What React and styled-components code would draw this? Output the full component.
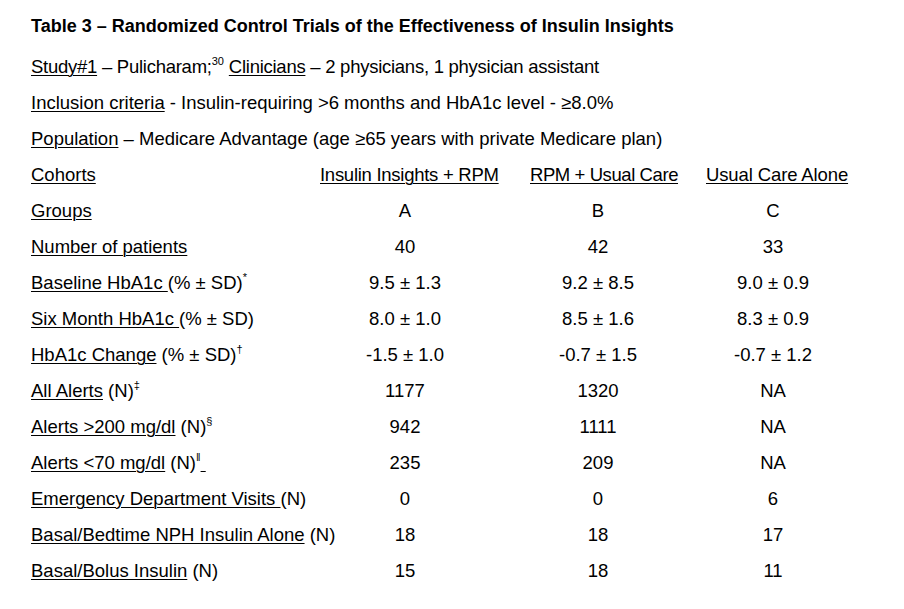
import React from "react";
import styled, { createGlobalStyle } from "styled-components";

const GlobalStyle = createGlobalStyle`
  html, body {
    margin: 0;
    padding: 0;
    background: #ffffff;
  }
  body {
    font-family: "Liberation Sans", Arial, sans-serif;
    color: #000000;
  }
`;

const Page = styled.div`
  width: 904px;
  height: 609px;
  box-sizing: border-box;
  padding: 8px 0 0 31px;
  background: #ffffff;
  overflow: hidden;
`;

const Title = styled.div`
  font-weight: 700;
  font-size: 18px;
  line-height: 36px;
  margin-bottom: 5px;
  white-space: nowrap;
`;

const Line = styled.div`
  font-size: 18.5px;
  line-height: 36px;
  white-space: nowrap;
  letter-spacing: ${(p) => p.$spacing || 0}px;
`;

const U = styled.span`
  text-decoration: underline;
  text-underline-offset: 2px;
  text-decoration-thickness: 1px;
`;

const Sup = styled.sup`
  font-size: 11px;
  line-height: 0;
  vertical-align: 8px;
  letter-spacing: 0;
`;

const Grid = styled.div`
  display: grid;
  grid-template-columns: 249px 170px 136px 134px;
  column-gap: 40px;
  grid-auto-rows: 36px;
  font-size: 18.5px;
  line-height: 36px;
`;

const Label = styled.div`
  white-space: nowrap;
`;

const Head = styled.div`
  white-space: nowrap;
  text-align: left;
  letter-spacing: ${(p) => p.$spacing || 0}px;
`;

const Value = styled.div`
  white-space: nowrap;
  text-align: center;
`;

const heads = [
  { text: "Insulin Insights + RPM", spacing: -0.27 },
  { text: "RPM + Usual Care", spacing: -0.42 },
  { text: "Usual Care Alone", spacing: -0.12 },
];

const rows = [
  { label: "Groups", values: ["A", "B", "C"] },
  { label: "Number of patients", values: ["40", "42", "33"] },
  {
    label: "Baseline HbA1c ",
    rest: "(% ± SD)",
    sup: "*",
    values: ["9.5 ± 1.3", "9.2 ± 8.5", "9.0 ± 0.9"],
  },
  {
    label: "Six Month HbA1c ",
    rest: "(% ± SD)",
    values: ["8.0 ± 1.0", "8.5 ± 1.6", "8.3 ± 0.9"],
  },
  {
    label: "HbA1c Change",
    rest: " (% ± SD)",
    sup: "†",
    values: ["-1.5 ± 1.0", "-0.7 ± 1.5", "-0.7 ± 1.2"],
  },
  { label: "All Alerts", rest: " (N)", sup: "‡", values: ["1177", "1320", "NA"] },
  { label: "Alerts >200 mg/dl", rest: " (N)", sup: "§", values: ["942", "1111", "NA"] },
  {
    label: "Alerts <70 mg/dl",
    rest: " (N)",
    sup: "‖",
    trail: true,
    values: ["235", "209", "NA"],
  },
  { label: "Emergency Department Visits ", rest: "(N)", values: ["0", "0", "6"] },
  { label: "Basal/Bedtime NPH Insulin Alone", rest: " (N)", values: ["18", "18", "17"] },
  { label: "Basal/Bolus Insulin", rest: " (N)", values: ["15", "18", "11"] },
];

const App = () => {
  return (
    <>
      <GlobalStyle />
      <Page>
        <Title>Table 3 – Randomized Control Trials of the Effectiveness of Insulin Insights</Title>
        <Line $spacing={-0.26}>
          <U>Study#1</U> – Pulicharam;<Sup>30</Sup> <U>Clinicians</U> – 2 physicians, 1 physician
          assistant
        </Line>
        <Line>
          <U>Inclusion criteria</U> - Insulin-requiring &gt;6 months and HbA1c level - ≥8.0%
        </Line>
        <Line>
          <U>Population</U> – Medicare Advantage (age ≥65 years with private Medicare plan)
        </Line>
        <Grid>
          <Label>
            <U>Cohorts</U>
          </Label>
          {heads.map((h) => (
            <Head key={h.text} $spacing={h.spacing}>
              <U>{h.text}</U>
            </Head>
          ))}
          {rows.map((row) => (
            <React.Fragment key={row.label}>
              <Label>
                <U>{row.label}</U>
                {row.rest}
                {row.sup && <Sup>{row.sup}</Sup>}
                {row.trail && <U>&nbsp;</U>}
              </Label>
              {row.values.map((v, i) => (
                <Value key={i}>{v}</Value>
              ))}
            </React.Fragment>
          ))}
        </Grid>
      </Page>
    </>
  );
};

export default App;
